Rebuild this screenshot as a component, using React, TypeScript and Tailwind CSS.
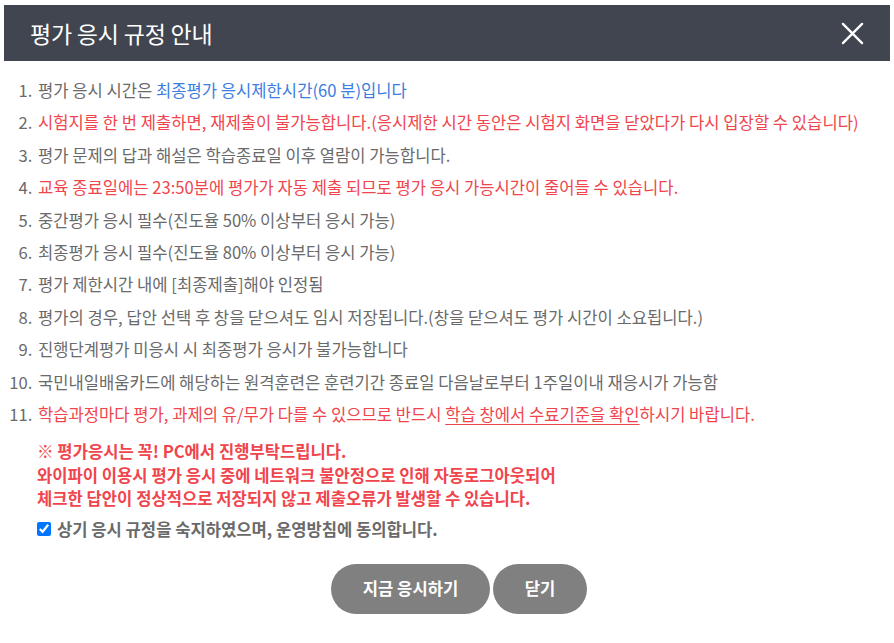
import React from "react";

const gray = "text-[#6a6a6a]";
const red = "text-[#f0454d]";
const blue = "text-[#3b7de0]";

function RuleItem({ children }: { children: React.ReactNode }) {
  return <li className="pl-[2px] marker:text-[#6a6a6a]">{children}</li>;
}

export default function App() {
  return (
    <div className="w-[894px] h-[643px] bg-white font-['Noto_Sans_CJK_KR','Noto_Sans',sans-serif] overflow-hidden">
      <div className="mx-[4px] mt-[5px] h-[56px] bg-[#41454f] flex items-center justify-between pl-[26px] pr-[26px]">
        <h1 className="text-white text-[23px] font-normal tracking-[-0.2px]">평가 응시 규정 안내</h1>
        <button className="text-white" aria-label="닫기">
          <svg width="23" height="23" viewBox="0 0 24 24" fill="none" stroke="currentColor" strokeWidth="2.4" strokeLinecap="round">
            <path d="M2 2 L22 22 M22 2 L2 22" />
          </svg>
        </button>
      </div>

      <ol className={`list-decimal pl-[36px] mt-[13px] text-[16.6px] leading-[32.4px] ${gray}`}>
        <RuleItem>
          평가 응시 시간은 <span className={blue}>최종평가 응시제한시간(60 분)입니다</span>
        </RuleItem>
        <RuleItem>
          <span className={red}>
            시험지를 한 번 제출하면, 재제출이 불가능합니다.(응시제한 시간 동안은 시험지 화면을 닫았다가 다시 입장할 수 있습니다)
          </span>
        </RuleItem>
        <RuleItem>평가 문제의 답과 해설은 학습종료일 이후 열람이 가능합니다.</RuleItem>
        <RuleItem>
          <span className={red}>교육 종료일에는 23:50분에 평가가 자동 제출 되므로 평가 응시 가능시간이 줄어들 수 있습니다.</span>
        </RuleItem>
        <RuleItem>중간평가 응시 필수(진도율 50% 이상부터 응시 가능)</RuleItem>
        <RuleItem>최종평가 응시 필수(진도율 80% 이상부터 응시 가능)</RuleItem>
        <RuleItem>평가 제한시간 내에 [최종제출]해야 인정됨</RuleItem>
        <RuleItem>평가의 경우, 답안 선택 후 창을 닫으셔도 임시 저장됩니다.(창을 닫으셔도 평가 시간이 소요됩니다.)</RuleItem>
        <RuleItem>진행단계평가 미응시 시 최종평가 응시가 불가능합니다</RuleItem>
        <RuleItem>국민내일배움카드에 해당하는 원격훈련은 훈련기간 종료일 다음날로부터 1주일이내 재응시가 가능함</RuleItem>
        <RuleItem>
          <span className={red}>
            학습과정마다 평가, 과제의 유/무가 다를 수 있으므로 반드시{" "}
            <span className="underline underline-offset-[3px]">학습 창에서 수료기준을 확인</span>하시기 바랍니다.
          </span>
        </RuleItem>
      </ol>

      <div className={`pl-[37px] mt-[10px] text-[16.6px] leading-[23.5px] font-bold ${red}`}>
        <p>※ 평가응시는 꼭! PC에서 진행부탁드립니다.</p>
        <p>와이파이 이용시 평가 응시 중에 네트워크 불안정으로 인해 자동로그아웃되어</p>
        <p>체크한 답안이 정상적으로 저장되지 않고 제출오류가 발생할 수 있습니다.</p>
      </div>

      <label className="flex items-center gap-[6px] pl-[37px] mt-[6px] text-[16.6px] font-bold text-[#6a6a6a]">
        <input type="checkbox" defaultChecked className="w-[14px] h-[14px] accent-[#0075ff]" />
        상기 응시 규정을 숙지하였으며, 운영방침에 동의합니다.
      </label>

      <div className="flex justify-center gap-[3px] mt-[22px] pl-[24px]">
        <button className="w-[159px] h-[50px] rounded-full bg-[#808080] text-white text-[16.6px] font-bold">
          지금 응시하기
        </button>
        <button className="w-[94px] h-[50px] rounded-full bg-[#808080] text-white text-[16.6px] font-bold">
          닫기
        </button>
      </div>
    </div>
  );
}
